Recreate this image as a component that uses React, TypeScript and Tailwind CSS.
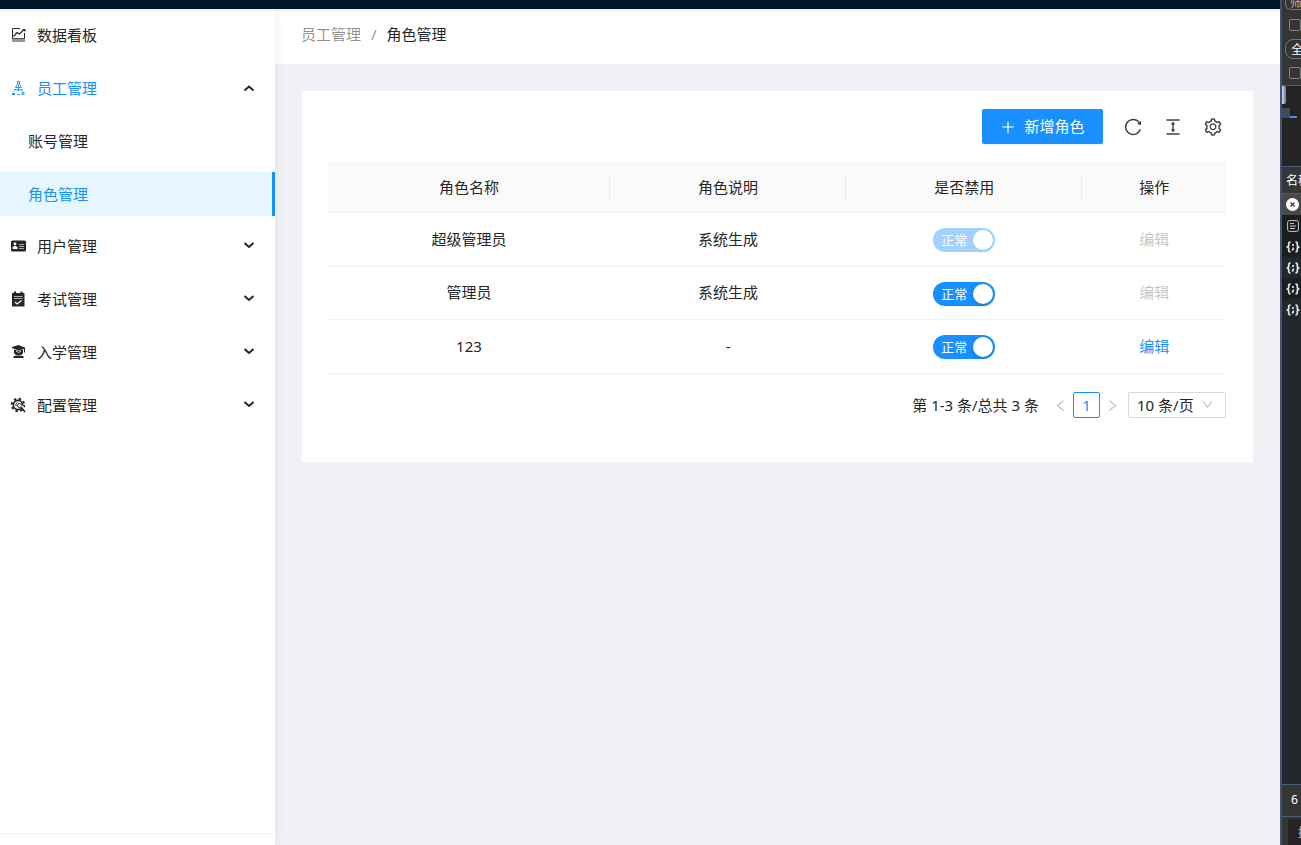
import { useState } from 'react'
import type { ReactNode } from 'react'
import {
  AiOutlineColumnHeight,
  AiOutlineDown,
  AiOutlineLeft,
  AiOutlinePlus,
  AiOutlineReload,
  AiOutlineRight,
  AiOutlineSetting
} from 'react-icons/ai'

interface Role {
  id: number
  name: string
  remark: string
  enabled: boolean
  locked: boolean
  editable: boolean
}

interface MenuItem {
  key: string
  label: string
  icon: ReactNode
}

const initialRoles: Role[] = [
  { id: 1, name: '超级管理员', remark: '系统生成', enabled: true, locked: true, editable: false },
  { id: 2, name: '管理员', remark: '系统生成', enabled: true, locked: false, editable: false },
  { id: 3, name: '123', remark: '-', enabled: true, locked: false, editable: true }
]

function BoardIcon() {
  return (
    <svg className="size-4" viewBox="0 0 16 16" fill="none" stroke="currentColor">
      <path d="M10 1.500H2.500v10M14.500 6v6" />
      <path d="M3.500 9.500 7 5.500l2.500 1.500 4-4" strokeWidth="1.200" />
      <path d="M12 2h3.500v3z" fill="currentColor" stroke="none" />
      <path d="M2 11.500h13V15H2z" fill="#969696" stroke="none" />
      <path d="M2 11.500h12.500" strokeWidth=".7" />
    </svg>
  )
}

function StaffIcon() {
  return (
    <svg className="size-4" viewBox="0 0 16 16" fill="none" stroke="currentColor" strokeWidth=".9">
      <path d="M7 1.500h3M7.500 2v2h2V2M7.500 4 5.500 7.500h6L9.500 4M8.500 5v6" />
      <path d="M3.500 12 5.500 10h6l2 2M4 9.500h9" strokeDasharray="2 .8" />
      <path d="M2 13h3v2H2z" fill="currentColor" stroke="none" />
      <path d="M7 14.500h3" />
      <path d="M12 12.500h2v2h-2z" />
    </svg>
  )
}

function UserCardIcon() {
  return (
    <svg className="size-4" viewBox="0 0 16 16">
      <rect x="1" y="2.500" width="15" height="11" rx="1.500" fill="currentColor" />
      <circle cx="5" cy="6" r="1.400" fill="#fff" />
      <path d="M2.500 11V9.500L4 8h2l1.500 1.500V11z" fill="#fff" />
      <path d="M9 6.500h5M9 8.500h5M9 10.500h5" stroke="#bbb" strokeWidth=".9" />
    </svg>
  )
}

function ExamIcon() {
  return (
    <svg className="size-4" viewBox="0 0 16 16" fill="none">
      <path d="M2 2h12.500v13.500H2z" fill="currentColor" />
      <path d="M5 .5v3M11.500 .5v3" stroke="currentColor" strokeWidth="2" />
      <path d="M6.500 1.500h3.500" stroke="#fff" />
      <path d="M4 5.500h8.500M4 7.500h8.500" stroke="#aaa" />
      <path d="m5 11 2 2 4.500-3.500" stroke="#fff" strokeWidth="1.200" />
    </svg>
  )
}

function SchoolIcon() {
  return (
    <svg className="size-4" viewBox="0 0 16 16" fill="currentColor">
      <path d="m8.500 1 6.500 2.500v5h-1V5L8.500 6.500 2 4V3z" />
      <path d="M4 5.500 8.500 7 13 5.500V9c-1 3-8 3-9 0z" />
      <path d="m6 7 2.500 1.500L11 7" stroke="#fff" strokeWidth=".8" fill="none" />
      <path d="M5.500 10.500h6v1.500h-6z" opacity=".45" />
      <path d="M3.500 12h10v2h-10z" />
    </svg>
  )
}

function ConfigIcon() {
  return (
    <svg className="size-4" viewBox="0 0 16 16" fill="none" stroke="currentColor">
      <circle cx="8" cy="8" r="4.600" strokeWidth="1.600" />
      <circle cx="8" cy="8" r="6.200" strokeWidth="2" strokeDasharray="2.430 2.430" />
      <circle cx="9.500" cy="8.500" r="2" strokeWidth="1" fill="#fff" />
      <path d="M6 9V7.500C6 6.500 6.500 6 7.500 5.500" strokeWidth="1" />
      <path d="m11.500 9 4 5" stroke="#fff" strokeWidth="2.500" />
      <path d="m11 10 4 5" strokeWidth="1.600" />
    </svg>
  )
}

const menus: MenuItem[] = [
  { key: 'user', label: '用户管理', icon: <UserCardIcon /> },
  { key: 'exam', label: '考试管理', icon: <ExamIcon /> },
  { key: 'school', label: '入学管理', icon: <SchoolIcon /> },
  { key: 'config', label: '配置管理', icon: <ConfigIcon /> }
]

function Arrow({ up = false }: { up?: boolean }) {
  return (
    <svg className="h-3 w-3" viewBox="0 0 12 12" fill="none" stroke="#262626" strokeWidth="2">
      <path d={up ? 'm1.500 8.500 4.500-4 4.500 4' : 'm1.500 3 4.500 4L10.500 3'} />
    </svg>
  )
}

function Sidebar() {
  return (
    <aside className="z-10 flex w-[275px] shrink-0 flex-col bg-white shadow-[2px_0_8px_rgba(29,35,41,0.06)]">
      <nav className="flex-1 pt-1">
        <ul>
          <li className="mb-[9px]">
            <a href="#board" className="flex h-11 items-center gap-[11px] pl-2.5">
              <BoardIcon />
              <span>数据看板</span>
            </a>
          </li>
          <li className="mb-2">
            <button type="button" aria-expanded="true" className="flex h-11 w-full items-center gap-[11px] pr-5 pl-2.5 text-[#1890ff]">
              <StaffIcon />
              <span className="flex-1 text-left">员工管理</span>
              <Arrow up />
            </button>
            <ul className="mt-[9px] space-y-[9px]">
              <li>
                <a href="#account" className="flex h-11 items-center pl-7">账号管理</a>
              </li>
              <li>
                <a
                  href="#role"
                  aria-current="page"
                  className="flex h-11 items-center border-r-3 border-[#1890ff] bg-[#e6f7ff] pl-7 text-[#1890ff]"
                >
                  角色管理
                </a>
              </li>
            </ul>
          </li>
          {menus.map((menu) => (
            <li key={menu.key} className="mb-[9px]">
              <button type="button" aria-expanded="false" className="flex h-11 w-full items-center gap-[11px] pr-5 pl-2.5">
                {menu.icon}
                <span className="flex-1 text-left">{menu.label}</span>
                <Arrow />
              </button>
            </li>
          ))}
        </ul>
      </nav>
      <div className="h-3 border-t border-[#f0f0f0]" />
    </aside>
  )
}

interface SwitchProps {
  label: string
  checked: boolean
  disabled: boolean
  onToggle: () => void
}

function StatusSwitch({ label, checked, disabled, onToggle }: SwitchProps) {
  return (
    <label className="inline-flex align-middle">
      <input
        type="checkbox"
        role="switch"
        aria-label={label}
        checked={checked}
        disabled={disabled}
        onChange={onToggle}
        className="peer sr-only"
      />
      <span className="flex h-6 w-[62px] flex-row-reverse items-center justify-between rounded-full bg-[#bfbfbf] px-0.5 text-[13px] text-white peer-checked:flex-row peer-checked:bg-[#1890ff] peer-checked:pl-2 peer-disabled:opacity-40">
        <span>{checked ? '正常' : '禁用'}</span>
        <span className="size-5 rounded-full bg-white shadow-[0_2px_4px_rgba(0,35,11,0.2)]" />
      </span>
    </label>
  )
}

function RoleTable() {
  const [roles, setRoles] = useState<Role[]>(initialRoles)

  const toggle = (id: number) => {
    setRoles(roles.map((role) => (role.id === id ? { ...role, enabled: !role.enabled } : role)))
  }

  const headCell = 'relative h-[51px] border-b border-[#f0f0f0] font-normal'
  const divider = 'absolute top-3 right-0 h-[26px] w-px bg-[#ebebeb]'

  return (
    <table className="w-full table-fixed border-separate border-spacing-0 text-center">
      <thead className="bg-[#fafafa]">
        <tr>
          <th className={`${headCell} w-[31.4%]`}>
            角色名称
            <span className={divider} />
          </th>
          <th className={`${headCell} w-[26.3%]`}>
            角色说明
            <span className={divider} />
          </th>
          <th className={`${headCell} w-[26.3%]`}>
            是否禁用
            <span className={divider} />
          </th>
          <th className={headCell}>操作</th>
        </tr>
      </thead>
      <tbody>
        {roles.map((role) => (
          <tr key={role.id} className="h-[54px] even:h-[53px] *:border-b *:border-[#f0f0f0]">
            <td className="pb-0.5">{role.name}</td>
            <td className="pb-0.5">{role.remark}</td>
            <td>
              <StatusSwitch
                label={role.name}
                checked={role.enabled}
                disabled={role.locked}
                onToggle={() => toggle(role.id)}
              />
            </td>
            <td className="pb-0.5">
              <button
                type="button"
                disabled={!role.editable}
                className="text-[#1890ff] disabled:text-black/25"
              >
                编辑
              </button>
            </td>
          </tr>
        ))}
      </tbody>
    </table>
  )
}

function Pagination() {
  return (
    <div className="mt-[18px] flex items-center justify-end">
      <span className="mr-3.5">第 1-3 条/总共 3 条</span>
      <button type="button" aria-label="上一页" disabled className="text-[15px] text-black/25">
        <AiOutlineLeft />
      </button>
      <button type="button" aria-current="page" className="mx-[5px] h-[26px] w-[27px] rounded-xs border border-[#1890ff] text-[#1890ff]">
        1
      </button>
      <button type="button" aria-label="下一页" disabled className="text-[15px] text-black/25">
        <AiOutlineRight />
      </button>
      <div className="relative ml-2">
        <select
          aria-label="每页条数"
          className="block h-[26px] w-[98px] appearance-none rounded-xs border border-[#d9d9d9] bg-white pl-2 leading-6"
        >
          <option>10 条/页</option>
          <option>20 条/页</option>
          <option>50 条/页</option>
        </select>
        <AiOutlineDown className="pointer-events-none absolute top-1.5 right-3 text-[13px] text-black/25" />
      </div>
    </div>
  )
}

function BracesIcon() {
  return (
    <svg className="h-3 w-3.5 shrink-0" viewBox="0 0 14 12" fill="none" stroke="#e3e3e3" strokeWidth="1.700">
      <path d="M4.500 1.200H4q-1.300 0-1.300 1.300v2Q2.700 6 .5 6q2.200 0 2.200 1.500v2q0 1.300 1.300 1.300h.5" />
      <path d="M9.500 1.200h.5q1.300 0 1.300 1.300v2q0 1.500 2.200 1.500-2.200 0-2.200 1.500v2q0 1.300-1.300 1.300h-.5" />
      <path d="M7 3v2M7.200 6.500v1.500l-1 1.500" />
    </svg>
  )
}

// docked inspector, only its left edge is visible
function Inspector() {
  return (
    <aside className="flex w-[21px] shrink-0 flex-col overflow-hidden border-l-2 border-[#43546b] bg-[#24282c] text-xs whitespace-nowrap text-white">
      <div className="h-[86px] border-b border-[#475c77] bg-[#353535] pl-[3px]">
        <div className="flex h-2.5 w-20 items-end overflow-hidden rounded-b-md border border-t-0 border-[#777] pl-1 leading-3 text-[#b5b5b5]">
          筛选器
        </div>
        <input type="checkbox" aria-label="反转" className="mt-[9px] ml-1 block size-3 appearance-none rounded-xs border border-[#858585]" />
        <button type="button" className="mt-2 block h-5 w-12 rounded-lg border border-[#777] pl-[5px] text-left leading-5">
          全部
        </button>
        <input type="checkbox" aria-label="第三方请求" className="mt-2 ml-1 block size-3 appearance-none rounded-xs border border-[#858585]" />
      </div>
      <div className="h-[81px] border-b border-[#475c77] bg-[#242424]">
        <div className="h-[18px] w-1 rounded-r-xs border-r-2 border-[#8b8b8b] bg-[#a8c7fa]" />
        <div className="mt-1 flex h-2.5 items-end">
          <div className="h-2.5 w-2 bg-[#3e4d5c]" />
          <div className="h-0.5 w-[7px] bg-[#4c8df6]" />
        </div>
      </div>
      <div className="h-[27px] border-b border-[#475c77] bg-[#353535] pl-1 leading-[27px]">名称</div>
      <div className="flex h-[21px] items-center bg-[#484848] pl-1">
        <svg className="size-[13px] shrink-0" viewBox="0 0 13 13">
          <circle cx="6.500" cy="6.500" r="6.500" fill="#fff" />
          <path d="m4.500 4.500 4 4m0-4-4 4" stroke="#333" strokeWidth="1.100" />
        </svg>
      </div>
      <div className="flex h-[21px] items-center bg-[#1a1e21] pl-[5px]">
        <svg className="size-3 shrink-0" viewBox="0 0 12 12" fill="none" stroke="#c7c7c7">
          <rect x=".6" y=".6" width="10.800" height="10.800" rx="2" />
          <path d="M3 3.500h4M3 6h6M3 8.500h5" />
        </svg>
      </div>
      {[0, 1, 2, 3].map((row) => (
        <div key={row} className="flex h-[21px] items-center pl-1 odd:bg-[#20282d] even:bg-[#1a1e21]">
          <BracesIcon />
        </div>
      ))}
      <div className="flex-1" />
      <div className="h-8 border-t border-[#475c77] bg-[#353535] pl-[9px] leading-[30px]">6 次请求</div>
      <div className="h-[29px] border-t border-[#475c77] bg-[#353535] pt-0.5 pl-1.5">
        <div className="h-full w-20 rounded-t-xs bg-[#242424] pl-2.5 leading-7 text-[#a8c7fa]">搜索</div>
      </div>
    </aside>
  )
}

export default function App() {
  return (
    <div className="flex min-h-screen bg-[#f0f2f5] font-['Noto_Sans','Noto_Sans_CJK_SC',sans-serif] text-[15px] leading-6 text-[#262626]">
      <div className="flex min-w-0 flex-1 flex-col">
        <div className="z-20 h-[9px] bg-[#001529] shadow-[0_1px_4px_rgba(0,21,41,0.12)]" />
        <div className="flex flex-1">
          <Sidebar />
          <div className="min-w-0 flex-1 bg-[#f0f1f5]">
            <header className="flex h-[55px] items-start bg-white px-[26px] pt-[13px]">
              <nav aria-label="面包屑" className="flex gap-2.5">
                <a href="#staff" className="text-black/45">员工管理</a>
                <span className="text-black/45">/</span>
                <span>角色管理</span>
              </nav>
            </header>
            <main className="p-[27px]">
              <section className="bg-white pt-[18px] pr-[27px] pb-11 pl-[26px]">
                <div className="mb-[18px] flex items-center justify-end text-xl text-[#404040]">
                  <button
                    type="button"
                    className="mr-5 flex h-[35px] w-[121px] items-center justify-center gap-2 rounded-xs bg-[#1890ff] text-[15px] text-white shadow-[0_2px_0_rgba(0,0,0,0.04)]"
                  >
                    <AiOutlinePlus className="text-base" />
                    新增角色
                  </button>
                  <button type="button" aria-label="刷新" className="mr-5">
                    <AiOutlineReload />
                  </button>
                  <button type="button" aria-label="密度" className="mr-5">
                    <AiOutlineColumnHeight />
                  </button>
                  <button type="button" aria-label="列设置" className="mr-[3px]">
                    <AiOutlineSetting />
                  </button>
                </div>
                <RoleTable />
                <Pagination />
              </section>
            </main>
          </div>
        </div>
      </div>
      <Inspector />
    </div>
  )
}
